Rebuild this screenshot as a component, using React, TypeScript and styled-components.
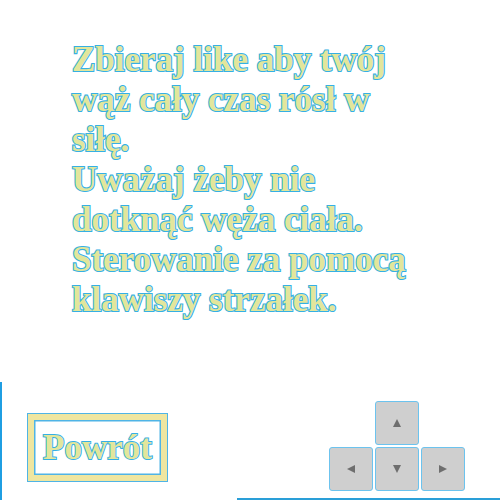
import React from "react";
import styled, { createGlobalStyle } from "styled-components";

const Global = createGlobalStyle`
  html, body { margin: 0; padding: 0; background: #ffffff; }
  #root { width: 500px; height: 500px; }
`;

const Page = styled.div`
  width: 500px;
  height: 500px;
  display: flex;
  flex-direction: column;
  overflow: hidden;
`;

const Instructions = styled.div`
  padding: 40px 0 0 72px;
  width: 350px;
  font-family: "Liberation Serif", "Times New Roman", serif;
  font-weight: 700;
  font-size: 35px;
  line-height: 40px;
  color: #e2e69c;
  -webkit-text-stroke: 2.2px #35b0e4;
  paint-order: stroke fill;
`;

const Line = styled.div``;

const Footer = styled.div`
  margin-top: auto;
  height: 118px;
  border-left: 2px solid #1f9ee2;
  box-sizing: border-box;
  display: flex;
  flex-direction: column;
`;

const Row = styled.div`
  display: flex;
  justify-content: space-between;
  align-items: flex-start;
`;

const BackButton = styled.button`
  margin: 32px 0 0 26px;
  width: 139px;
  height: 67px;
  box-sizing: border-box;
  background: #ffffff;
  border: 6px solid #efe6a0;
  box-shadow: inset 0 0 0 1.5px #4fb4e6, 0 0 0 1px #4fb4e6;
  padding: 0;
  display: flex;
  align-items: center;
  justify-content: center;
  font-family: "Liberation Serif", "Times New Roman", serif;
  font-weight: 700;
  font-size: 35px;
  color: #e2e69c;
  -webkit-text-stroke: 2px #35b0e4;
  paint-order: stroke fill;
  cursor: pointer;
`;

const Keys = styled.div`
  margin: 19px 35px 0 0;
  display: grid;
  grid-template-columns: repeat(3, 44px);
  grid-auto-rows: 44px;
  gap: 2px;
`;

const Key = styled.div<{ $col: number }>`
  grid-column: ${(p) => p.$col};
  box-sizing: border-box;
  background: #cfcfcf;
  border: 1px solid #6cc3ee;
  border-radius: 3px;
  display: flex;
  align-items: center;
  justify-content: center;
`;

const BottomLine = styled.div`
  margin: auto 0 0 235px;
  height: 2px;
  background: #2a9fd8;
`;

type Dir = "up" | "down" | "left" | "right";

const Arrow: React.FC<{ dir: Dir }> = ({ dir }) => {
  const pts: Record<Dir, string> = {
    up: "4,0 8,8 0,8",
    down: "0,0 8,0 4,8",
    left: "8,0 8,8 0,4",
    right: "0,0 8,4 0,8",
  };
  return (
    <svg width="8" height="8" viewBox="0 0 8 8">
      <polygon points={pts[dir]} fill="#6e6e6e" />
    </svg>
  );
};

export default function App() {
  return (
    <Page>
      <Global />
      <Instructions>
        <Line>Zbieraj like aby twój wąż cały czas rósł w siłę.</Line>
        <Line>Uważaj żeby nie dotknąć węża ciała.</Line>
        <Line>Sterowanie za pomocą klawiszy strzałek.</Line>
      </Instructions>
      <Footer>
        <Row>
          <BackButton>Powrót</BackButton>
          <Keys>
            <Key $col={2}>
              <Arrow dir="up" />
            </Key>
            <Key $col={1}>
              <Arrow dir="left" />
            </Key>
            <Key $col={2}>
              <Arrow dir="down" />
            </Key>
            <Key $col={3}>
              <Arrow dir="right" />
            </Key>
          </Keys>
        </Row>
        <BottomLine />
      </Footer>
    </Page>
  );
}
